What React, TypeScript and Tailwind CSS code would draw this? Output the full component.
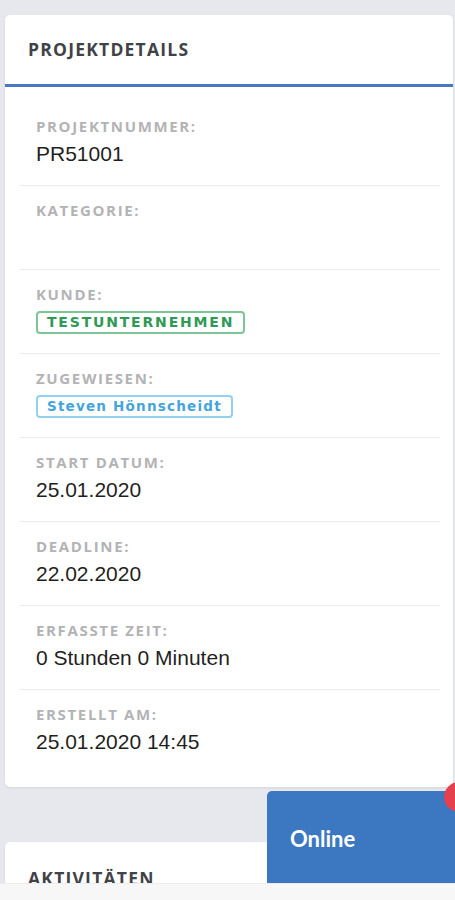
import React from "react";

type Detail = {
    label: string;
    value?: string;
    badge?: "green" | "blue";
};

const details: Detail[] = [
    { label: "Projektnummer:", value: "PR51001" },
    { label: "Kategorie:", value: "" },
    { label: "Kunde:", value: "TESTUNTERNEHMEN", badge: "green" },
    { label: "Zugewiesen:", value: "Steven Hönnscheidt", badge: "blue" },
    { label: "Start Datum:", value: "25.01.2020" },
    { label: "Deadline:", value: "22.02.2020" },
    { label: "Erfasste Zeit:", value: "0 Stunden 0 Minuten" },
    { label: "Erstellt am:", value: "25.01.2020 14:45" },
];

function Badge({ color, children }: { color: "green" | "blue"; children: React.ReactNode }) {
    const cls =
        color === "green"
            ? "border-[#7cc596] text-[#2f9a55] uppercase tracking-[0.13em] text-[14px]"
            : "border-[#93d0f0] text-[#45a4dc] tracking-[0.09em] text-[13.5px]";
    return (
        <span
            className={`inline-flex items-center h-[23px] px-[9px] border-2 rounded-[4px] font-bold font-['DejaVu_Sans',sans-serif] ${cls}`}
        >
            {children}
        </span>
    );
}

function DetailRow({ item, last }: { item: Detail; last: boolean }) {
    return (
        <div className={`pt-[14px] pb-[18px] pl-[16px] ${last ? "" : "border-b border-[#ececee]"}`}>
            <div className="h-[20px] leading-[20px] text-[15px] font-bold uppercase tracking-[0.11em] text-[#b3b3b5] font-['Open_Sans',sans-serif]">
                {item.label}
            </div>
            <div className="mt-[5px] h-[26px]">
                {item.badge ? (
                    <Badge color={item.badge}>{item.value}</Badge>
                ) : (
                    <span className="leading-[26px] text-[21px] text-[#1f1f22] font-['Liberation_Sans',Arial,sans-serif]">
                        {item.value}
                    </span>
                )}
            </div>
        </div>
    );
}

function CardHeader({ title, line }: { title: string; line?: boolean }) {
    return (
        <div className={`h-[72px] px-[23px] flex items-center ${line ? "border-b-[3px] border-[#4a77c4]" : ""}`}>
            <h2 className="text-[17.5px] font-bold uppercase tracking-[0.07em] text-[#3f4247] font-['Open_Sans',sans-serif]">
                {title}
            </h2>
        </div>
    );
}

export default function App() {
    return (
        <div className="min-h-screen bg-[#e6e8ed] pt-[15px] pl-[5px] pr-[2px] pb-[40px]">
            {/* Projektdetails */}
            <div className="bg-white rounded-[5px] shadow-[0_1px_3px_rgba(0,0,0,0.08)]">
                <CardHeader title="Projektdetails" line />
                <div className="pt-[15px] pb-[14px] pl-[15px] pr-[13px]">
                    {details.map((d, i) => (
                        <DetailRow key={d.label} item={d} last={i === details.length - 1} />
                    ))}
                </div>
            </div>

            {/* Aktivitäten */}
            <div className="mt-[55px] bg-white rounded-[5px] shadow-[0_1px_3px_rgba(0,0,0,0.08)] min-h-[200px]">
                <CardHeader title="Aktivitäten" />
            </div>

            {/* Online chat tab */}
            <div className="fixed left-[267px] right-0 top-[791px] h-[120px] bg-[#3b78c1] rounded-tl-[5px] pl-[23px] pt-[31px]">
                <span className="text-[22px] font-bold text-white font-['Lato','Open_Sans',sans-serif]">Online</span>
            </div>
            <div className="fixed left-[444px] top-[782px] w-[30px] h-[30px] rounded-full bg-[#e5404e]" />

            {/* bottom bar */}
            <div className="fixed left-0 right-0 bottom-0 h-[17px] bg-[#f7f7f8] border-t border-[#ededf0]" />
        </div>
    );
}
